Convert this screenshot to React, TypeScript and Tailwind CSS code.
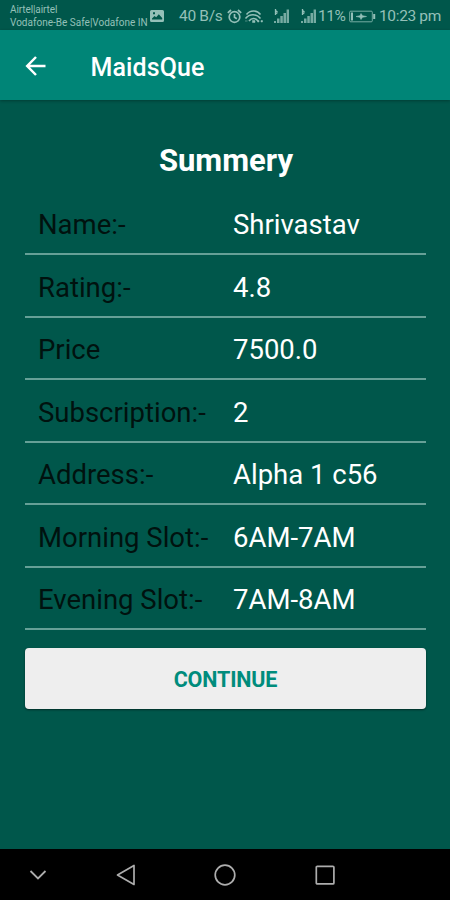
const details = [
  { label: 'Name:-', value: 'Shrivastav' },
  { label: 'Rating:-', value: '4.8' },
  { label: 'Price', value: '7500.0' },
  { label: 'Subscription:-', value: '2' },
  { label: 'Address:-', value: 'Alpha 1 c56' },
  { label: 'Morning Slot:-', value: '6AM-7AM' },
  { label: 'Evening Slot:-', value: '7AM-8AM' },
];

function SignalIcon({ className }: { className: string }) {
  return (
    <svg viewBox="0 0 16 16" className={`h-4 w-4 shrink-0 ${className}`} fill="currentColor">
      <path d="M1 13h2v2H1zM4 10.5h2.5V15H4zM7.3 8h2.5v7H7.3zM10.5 5H13v10h-2.5zM13.6 1.5H16V15h-2.4z" opacity=".8" />
      <path d="M2.5 1v6M2.5 2.5l2 1.5M2.5 6l2-1.5" fill="none" stroke="currentColor" strokeWidth="1.3" />
    </svg>
  );
}

function StatusBar() {
  return (
    <div className="flex h-[30px] items-center bg-[#00574b] pl-[10px] text-[#94c0b8]">
      <div className="w-[140px] shrink-0 pt-[2px] text-[10px] leading-[13px] whitespace-nowrap">
        <div className="tracking-[-0.1px]">Airtel|airtel</div>
        <div className="tracking-[0.01px]">Vodafone-Be Safe|Vodafone IN</div>
      </div>

      {/* Picture notification */}
      <svg viewBox="0 0 14 12" className="mt-[2px] h-3 w-3.5 shrink-0" fill="currentColor">
        <path
          fillRule="evenodd"
          d="M1.5 0h11A1.5 1.5 0 0 1 14 1.5v9a1.5 1.5 0 0 1-1.5 1.5h-11A1.5 1.5 0 0 1 0 10.5v-9A1.5 1.5 0 0 1 1.5 0zM2 9.5h10.2V8L8.8 4.2 6.2 7.2 4.5 6 2 8.5zM3 2.2v2h2v-2z"
        />
      </svg>
      <span className="ml-[15px] w-[48px] shrink-0 pt-[3px] text-[15.5px] tracking-[-0.3px] whitespace-nowrap">
        40 B/s
      </span>

      {/* Alarm */}
      <svg
        viewBox="0 0 15 15"
        className="mt-0.5 h-[15px] w-[15px] shrink-0"
        fill="none"
        stroke="currentColor"
        strokeWidth="1.7"
      >
        <circle cx="7.5" cy="8" r="5.3" />
        <path d="M.8 3.8L4 1M14.2 3.8L11 1M7.5 5v3.3l2.3 1.5" />
      </svg>

      {/* Wifi */}
      <svg
        viewBox="0 0 20 14"
        className="mt-[2px] ml-[2px] h-3.5 w-5 shrink-0"
        fill="none"
        stroke="currentColor"
        strokeWidth="1.5"
      >
        <path d="M2.5 5.5C6 .8 13 .8 16.5 5.5M1.5 9.5c4-5 11-5 15 0M5 12c2.5-3.5 6.5-3.5 9 0" />
        <path
          d="M8.5 11.5h2.5v2H8.500zM13.5 11.5h1.5v1.5h-1.5zM17 11.5h1.5v1.5H17zM1 12h2.5"
          fill="currentColor"
          strokeWidth=".5"
        />
      </svg>
      <SignalIcon className="mt-0.5 ml-[9px]" />
      <SignalIcon className="mt-0.5 ml-[11px]" />
      <span className="ml-[2px] w-[31px] shrink-0 pt-[3px] text-[15.5px] tracking-[-0.4px] whitespace-nowrap">11%</span>

      {/* Battery */}
      <svg viewBox="0 0 27 13" className="mt-[2px] h-[13px] w-[27px] shrink-0" fill="none" stroke="currentColor">
        <rect x=".7" y="1.2" width="22.6" height="10.6" rx="1" strokeWidth="1" opacity=".8" />
        <path d="M3 2.5v8M25.2 4v5" strokeWidth="2" />
        <path d="M7 6.5l4-.8 1-2.2 1.5 2.2 4 .8-4 .8-1.5 2.2-1-2.2z" fill="currentColor" strokeWidth=".6" />
      </svg>
      <span className="ml-[3px] pt-[3px] text-[15.5px] tracking-[-0.35px] whitespace-nowrap">10:23 pm</span>
    </div>
  );
}

function AppBar() {
  return (
    <header className="relative flex h-[70px] items-center bg-[#008577] pl-[25px] text-white shadow-[0_1px_3px_rgba(0,0,0,0.3)]">
      <button aria-label="Back" className="pt-px">
        <svg viewBox="0 0 22 22" className="block h-[22px] w-[22px]" fill="none" stroke="currentColor" strokeWidth="2.5">
          <path d="M20.5 11H2.8M11 2L2.2 11l8.8 9" />
        </svg>
      </button>
      <h1 className="mt-[5px] ml-[43.5px] text-[25px] font-medium tracking-[0.1px]">MaidsQue</h1>
    </header>
  );
}

function NavigationBar() {
  return (
    <nav className="flex h-[51px] items-center bg-black text-[#adadad]">
      <svg viewBox="0 0 18 12" className="ml-[29px] h-3 w-[18px]" fill="none" stroke="currentColor" strokeWidth="1.8">
        <path d="M1.5 2L9 9.5 16.5 2" />
      </svg>
      <svg viewBox="0 0 22 24" className="ml-[68px] h-6 w-[22px]" fill="none" stroke="currentColor" strokeWidth="1.7">
        <path d="M19 2.5v19L2.5 12z" strokeLinejoin="round" />
      </svg>
      <svg viewBox="0 0 24 24" className="ml-[76px] h-6 w-6" fill="none" stroke="currentColor" strokeWidth="1.7">
        <circle cx="12" cy="12" r="9.8" />
      </svg>
      <svg viewBox="0 0 22 22" className="ml-[77px] h-[22px] w-[22px]" fill="none" stroke="currentColor" strokeWidth="1.7">
        <rect x="2.3" y="2.3" width="17.6" height="17.6" rx="1" />
      </svg>
    </nav>
  );
}

export default function App() {
  return (
    <div className="flex h-[900px] w-[450px] flex-col overflow-hidden bg-[#00574b] font-[Roboto,sans-serif]">
      <StatusBar />
      <AppBar />

      <main className="flex-1 pt-[41px] pr-[24px] pl-[25px]">
        <h2 className="h-[51.5px] pl-px text-center text-[31px] leading-[40px] font-bold text-white">Summery</h2>

        <dl>
          {details.map((item) => (
            <div
              key={item.label}
              className="flex h-[62.5px] items-center border-b-2 border-[#66a097] pt-[4px] pl-[13px] text-[27.5px]"
            >
              <dt className="w-[195px] shrink-0 whitespace-nowrap text-[#00120f]">{item.label}</dt>
              <dd className="whitespace-nowrap text-white">{item.value}</dd>
            </div>
          ))}
        </dl>

        <button className="mt-[18px] h-[61px] w-full rounded-[4px] bg-[#eeeeee] pt-[3px] text-[21.5px] font-bold tracking-[-0.15px] text-[#008c7c] shadow-[0_1px_2px_rgba(0,0,0,0.5)]">
          CONTINUE
        </button>
      </main>

      <NavigationBar />
    </div>
  );
}
